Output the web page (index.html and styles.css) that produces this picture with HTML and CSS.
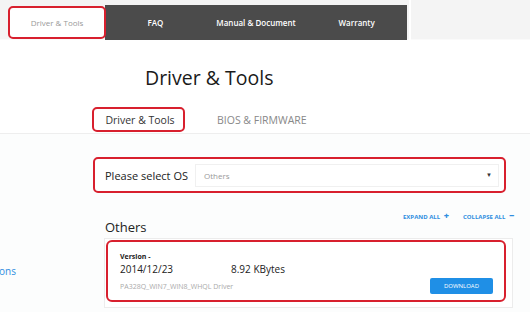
FILE: index.html
```html
<!DOCTYPE html>
<html lang="en">
<head>
    <meta charset="UTF-8">
    <title>Driver &amp; Tools</title>
    <link rel="stylesheet" href="styles.css">
</head>
<body>

<div class="topbar">
    <div class="tab active">Driver &amp; Tools</div>
    <div class="tabs">
        <div class="tab">FAQ</div>
        <div class="tab">Manual &amp; Document</div>
        <div class="tab">Warranty</div>
    </div>
    <div class="topbar-rest"></div>
</div>

<h1 class="title">Driver &amp; Tools</h1>

<div class="subtabs">
    <div class="subtab selected">Driver &amp; Tools</div>
    <div class="subtab">BIOS &amp; FIRMWARE</div>
</div>

<div class="page">
    <div class="side"><a href="#">ons</a></div>

    <div class="main">
        <div class="os-row">
            <span class="os-label">Please select OS</span>
            <div class="os-select">
                <span>Others</span>
                <span class="caret">&#9660;</span>
            </div>
        </div>

        <div class="toggles">
            <a href="#">EXPAND ALL <b>+</b></a>
            <a href="#">COLLAPSE ALL <b>&minus;</b></a>
        </div>

        <h2 class="group">Others</h2>

        <div class="card-wrap">
            <div class="card">
                <div class="version">Version -</div>
                <div class="meta">
                    <span class="date">2014/12/23</span>
                    <span class="size">8.92 KBytes</span>
                </div>
                <div class="bottom">
                    <span class="file">PA328Q_WIN7_WIN8_WHQL Driver</span>
                    <a class="download" href="#">DOWNLOAD</a>
                </div>
            </div>
        </div>
    </div>
</div>

</body>
</html>
```

FILE: styles.css
```css
body { margin: 0; font-family: "Open Sans", "Noto Sans", sans-serif; color: #222; background: #fff; width: 530px; overflow: hidden; }
a { text-decoration: none; }

/* Top tab bar */
.topbar { display: flex; background: #f4f4f4; height: 40px; padding: 5px 0 0 8px; box-sizing: border-box; border-bottom: 1px solid #fafafa; }
.tab { display: flex; align-items: center; justify-content: center; font-size: 8px; font-weight: 600; color: #fff; }
.tab.active { width: 98px; height: 33px; margin-top: 1px; box-sizing: border-box; background: #fff; color: #999; font-weight: 500; border: 2px solid #d8202e; border-radius: 5px; position: relative; z-index: 1; }
.tabs { display: flex; background: #4b4b4b; width: 302px; height: 35px; margin-left: -1px; }
.tabs .tab { flex: 1; }
.topbar-rest { flex: 1; border-left: 2px solid #fff; margin-left: 2px; margin-top: -5px; height: 40px; }

/* Page title */
.title { font-size: 19.5px; font-weight: 400; margin: 25px 0 0 145px; line-height: 26px; color: #1a1a1a; }

/* Sub tabs */
.subtabs { display: flex; align-items: center; gap: 32px; padding-left: 92px; margin-top: 15px; height: 27px; border-bottom: 1px solid #eee; }
.subtab { font-size: 10.5px; color: #888; }
.subtab.selected { width: 93px; height: 25px; box-sizing: border-box; border: 2px solid #d8202e; border-radius: 5px; display: flex; align-items: center; justify-content: center; color: #333; padding-left: 3px; }

/* Content area */
.page { display: flex; background: #fcfdfd; height: 180px; }
.side { width: 93px; padding-top: 124px; }
.side a { color: #2f8ee0; font-size: 10px; margin-left: -1px; }
.main { width: 413px; }

.os-row { display: flex; align-items: center; height: 36px; box-sizing: border-box; margin-top: 23px; border: 2px solid #d8202e; border-radius: 5px; background: #fff; padding: 0 5px 0 10px; }
.os-label { font-size: 11px; width: 90px; white-space: nowrap; color: #222; }
.os-select { flex: 1; height: 21px; border: 1px solid #f0f0f0; display: flex; align-items: center; justify-content: space-between; padding: 0 6px 0 8px; font-size: 8px; color: #999; background: #fff; }
.caret { font-size: 6px; color: #333; }

.toggles { display: flex; justify-content: flex-end; gap: 14px; margin-top: 16px; margin-right: -8px; height: 10px; }
.toggles a { color: #2f8ee0; font-size: 6px; font-weight: 700; }
.toggles b { font-size: 9px; margin-left: 2px; }

.group { font-size: 13px; font-weight: 400; margin: -1px 0 0 12px; line-height: 18px; color: #222; }

.card-wrap { margin: 2px -7px 0 11px; border: 1px solid #ececec; padding: 1px 6px 5px 1px; background: #fff; }
.card { border: 2px solid #d8202e; border-radius: 6px; height: 62px; box-sizing: border-box; padding: 10px 11px 0 12px; }
.version { font-size: 7px; font-weight: 700; line-height: 10px; }
.meta { display: flex; font-size: 10px; line-height: 15px; }
.date { width: 111px; }
.bottom { display: flex; justify-content: space-between; align-items: center; margin-top: 1px; }
.file { font-size: 7px; color: #aaa; }
.download { background: #1f8fe6; color: #fff; font-size: 6px; width: 63px; height: 16px; display: flex; align-items: center; justify-content: center; border-radius: 2px; }
```
